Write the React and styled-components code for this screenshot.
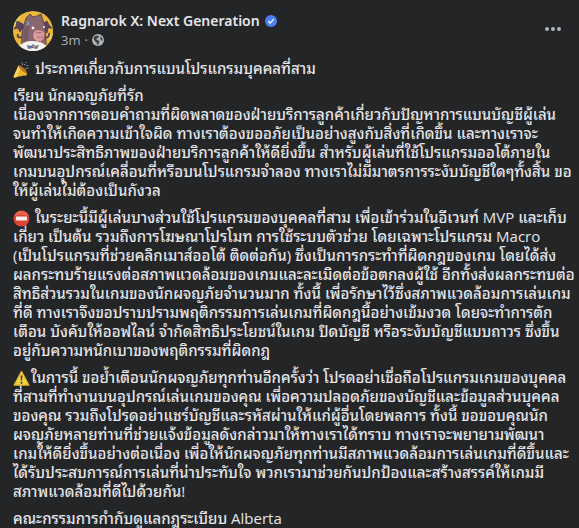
import React from 'react'
import styled, { createGlobalStyle } from 'styled-components'

const GlobalStyle = createGlobalStyle`
  body {
    margin: 0;
    background-color: #242526;
    color: #e4e6eb;
    font-family: 'Open Sans', 'Noto Sans Thai Looped', Loma, sans-serif;
  }
`

const Post = styled.article`
  padding: 11px 13px 0;
`

const Header = styled.header`
  display: flex;
  align-items: center;
  gap: 8px;
  height: 40px;
`

const Avatar = styled.a`
  display: block;
  width: 40px;
  height: 40px;

  svg {
    display: block;
  }
`

const Info = styled.div`
  flex: 1;
  min-width: 0;
`

const NameRow = styled.h2`
  display: flex;
  align-items: center;
  gap: 5px;
  margin: 0;
  font-family: 'Noto Sans', sans-serif;
  font-size: 14px;
  font-weight: 600;
  line-height: 18px;
`

const PageLink = styled.a`
  color: #e4e6eb;
  text-decoration: none;
  white-space: nowrap;
`

const Meta = styled.div`
  display: flex;
  align-items: center;
  gap: 4px;
  color: #b0b3b8;
  font-size: 13px;
  line-height: 20px;

  a {
    color: inherit;
    text-decoration: none;
  }
`

const MenuButton = styled.button`
  display: flex;
  align-items: center;
  align-self: flex-start;
  justify-content: center;
  width: 26px;
  height: 36px;
  padding: 0;
  border: 0;
  border-radius: 50%;
  background: none;
  color: #b0b3b8;
`

const Body = styled.div`
  display: flex;
  flex-direction: column;
  gap: 8px;
  padding-top: 8px;
`

const Paragraph = styled.p`
  margin: 0;
  font-size: 15px;
  font-weight: 500;
  line-height: 19px;
  white-space: pre;
`

const Emoji = styled.svg`
  width: 17px;
  height: 17px;
  margin-right: 1px;
  vertical-align: -4px;
`

const AvatarArt = () => (
  <svg width="40" height="40" viewBox="0 0 40 40" aria-hidden="true">
    <defs>
      <clipPath id="avatar">
        <circle cx="20" cy="20" r="20" />
      </clipPath>
    </defs>
    <g clipPath="url(#avatar)">
      <rect width="40" height="40" fill="#e9b63a" />
      <path d="M0 0h9L4 16H0zM30 0h10v11zM33 24l7-2v12z" fill="#f2cc63" />
      <path d="M10 13 4 10 3 15l-2 3 4-1 2 4 2-3 4 1zM29 13l5-3 2 4 3 3-4 0-1 5-3-4-3 0z" fill="#5d4558" stroke="#473244" strokeWidth=".7" />
      <path d="M10 25c-4 3-6 1-5-2M31 27c4 0 6-2 5-5" fill="none" stroke="#5d4558" strokeWidth="2" />
      <path d="M9 35C8 27 9 20 11 14l2-7 4-4 3 3 4-1 4-2 2 6c2 6 3 12 3 26z" fill="#88676f" stroke="#5b434f" strokeWidth=".9" />
      <path d="M12 15c-2 6-2 12-1 16l5-2c-1-5-1-9 1-13z" fill="#765966" />
      <path d="M20 23c0-4 4-5 7-4 4 0 6 4 4 8-2 5-8 5-10 1-1-1-2-3-1-5z" fill="#dc9b9c" stroke="#8d5d68" strokeWidth=".8" />
      <path d="M23 21c2 1 4 1 6 0M24 25c2 2 4 2 6 0" fill="none" stroke="#9c6670" />
      <circle cx="20" cy="17" r="1.4" fill="#f5eff0" />
      <circle cx="31" cy="16" r="1" fill="#f5eff0" />
      <path d="M15 10c-2 3-1 4 0 4s2-1 0-4" fill="#67acd9" />
      <path d="M5 36c5-5 9-6 15-6s11 2 15 6l-3 5H8z" fill="#f4f3ee" />
      <path d="M14 34l4 1 2-2 2 2 4-1-2 4-4-1-5 1z" fill="#536eaa" />
      <path d="M19 35l3-1 2 1-3 2z" fill="#d49b5d" />
    </g>
  </svg>
)

const Verified = () => (
  <svg width="12" height="12" viewBox="0 0 12 12" role="img" aria-label="Verified">
    <circle cx="6" cy="6" r="6" fill="#4f7df3" />
    <path d="m3.3 6.2 1.9 1.9 3.6-4" fill="none" stroke="#fff" strokeWidth="1.4" />
  </svg>
)

const Globe = () => (
  <svg width="12" height="12" viewBox="0 0 12 12" role="img" aria-label="Public">
    <circle cx="6" cy="6" r="6" fill="#b0b3b8" />
    <path d="M2.2 2.4 5.5 1.5 7 2.6 5.7 4.2 4.2 4.6 4.8 6 6.8 6.5 7.5 8 6 10.8 5 10.8 4.7 8.5 3 7.2 1.4 4.4zM8.5 2.5l1.8 1.8.5 2.5L9.4 6.5 8.3 4.8z" fill="#3a3b3c" />
  </svg>
)

const Popper = () => (
  <Emoji viewBox="0 0 17 17" role="img" aria-label="Party popper">
    <path d="m5.5 4.5 8.5 8c0 2-1 2.5-3 2L2 16.5c-1.2.1-1.5-.6-1.2-1.6z" fill="#efb52f" />
    <path d="m5.5 4.5 2.3 2.2L3.3 16.2l-1.5.3c-1 0-1.2-.6-1-1.6z" fill="#f8d564" />
    <path d="M5.5 4.5c2-1 9 5 8.6 8-.7 1.5-9.2-5.2-8.6-8z" fill="#ba7824" />
    <path d="M9 4.5c.8-1 .5-2.3-.2-3M12 8c1-1 2.3-1 3.3-.4" fill="none" stroke="#8c9da2" />
    <path d="M11 3h1.3v1.3H11zM14 4h1.3v1.3H14zM12.4.9h1.2v1.2h-1.2z" fill="#8d8995" />
  </Emoji>
)

const NoEntry = () => (
  <Emoji viewBox="0 0 17 17" role="img" aria-label="No entry">
    <circle cx="8.5" cy="8.5" r="8" fill="#dc4632" />
    <path d="M1.5 6a7.4 7.4 0 0 1 14 0C11 4 6 4 1.5 6z" fill="#e7664d" />
    <rect x="3" y="6.5" width="11" height="4" rx=".7" fill="#f7eeee" />
  </Emoji>
)

const Warning = () => (
  <Emoji viewBox="0 0 17 17" role="img" aria-label="Warning">
    <path d="M8.5 1.7 15.7 15H1.3z" fill="#f5d442" stroke="#e9b92f" strokeWidth="1.5" strokeLinejoin="round" />
    <path d="M7.5 5.5h2l-.4 5.2H7.9z" fill="#45423c" />
    <circle cx="8.5" cy="12.8" r="1.1" fill="#45423c" />
  </Emoji>
)

const greeting = `เรียน นักผจญภัยที่รัก
เนื่องจากการตอบคำถามที่ผิดพลาดของฝ่ายบริการลูกค้าเกี่ยวกับปัญหาการแบนบัญชีผู้เล่น
จนทำให้เกิดความเข้าใจผิด ทางเราต้องขออภัยเป็นอย่างสูงกับสิ่งที่เกิดขึ้น และทางเราจะ
พัฒนาประสิทธิภาพของฝ่ายบริการลูกค้าให้ดียิ่งขึ้น สำหรับผู้เล่นที่ใช้โปรแกรมออโต้ภายใน
เกมบนอุปกรณ์เคลื่อนที่หรือบนโปรแกรมจำลอง ทางเราไม่มีมาตรการระงับบัญชีใดๆทั้งสิ้น ขอ
ให้ผู้เล่นไม่ต้องเป็นกังวล`

const violations = `ในระยะนี้มีผู้เล่นบางส่วนใช้โปรแกรมของบุคคลที่สาม เพื่อเข้าร่วมในอีเวนท์ MVP และเก็บ
เกี่ยว เป็นต้น รวมถึงการโฆษณาโปรโมท การใช้ระบบตัวช่วย โดยเฉพาะโปรแกรม Macro
(เป็นโปรแกรมที่ช่วยคลิกเมาส์ออโต้ ติดต่อกัน) ซึ่งเป็นการกระทำที่ผิดกฎของเกม โดยได้ส่ง
ผลกระทบร้ายแรงต่อสภาพแวดล้อมของเกมและละเมิดต่อข้อตกลงผู้ใช้ อีกทั้งส่งผลกระทบต่อ
สิทธิส่วนรวมในเกมของนักผจญภัยจำนวนมาก ทั้งนี้ เพื่อรักษาไว้ซึ่งสภาพแวดล้อมการเล่นเกม
ที่ดี ทางเราจึงขอปราบปรามพฤติกรรมการเล่นเกมที่ผิดกฎนี้อย่างเข้มงวด โดยจะทำการตัก
เตือน บังคับให้ออฟไลน์ จำกัดสิทธิประโยชน์ในเกม ปิดบัญชี หรือระงับบัญชีแบบถาวร ซึ่งขึ้น
อยู่กับความหนักเบาของพฤติกรรมที่ผิดกฎ`

const reminder = `ในการนี้ ขอย้ำเตือนนักผจญภัยทุกท่านอีกครั้งว่า โปรดอย่าเชื่อถือโปรแกรมเกมของบุคคล
ที่สามที่ทำงานบนอุปกรณ์เล่นเกมของคุณ เพื่อความปลอดภัยของบัญชีและข้อมูลส่วนบุคคล
ของคุณ รวมถึงโปรดอย่าแชร์บัญชีและรหัสผ่านให้แก่ผู้อื่นโดยพลการ ทั้งนี้ ขอขอบคุณนัก
ผจญภัยหลายท่านที่ช่วยแจ้งข้อมูลดังกล่าวมาให้ทางเราได้ทราบ ทางเราจะพยายามพัฒนา
เกมให้ดียิ่งขึ้นอย่างต่อเนื่อง เพื่อให้นักผจญภัยทุกท่านมีสภาพแวดล้อมการเล่นเกมที่ดีขึ้นและ
ได้รับประสบการณ์การเล่นที่น่าประทับใจ พวกเรามาช่วยกันปกป้องและสร้างสรรค์ให้เกมมี
สภาพแวดล้อมที่ดีไปด้วยกัน!`

export default function App() {
  return (
    <>
      <GlobalStyle />
      <Post>
        <Header>
          <Avatar href="#page" aria-label="Ragnarok X: Next Generation">
            <AvatarArt />
          </Avatar>
          <Info>
            <NameRow>
              <PageLink href="#page">Ragnarok X: Next Generation</PageLink>
              <Verified />
            </NameRow>
            <Meta>
              <a href="#post">3m</a>
              <span>·</span>
              <Globe />
            </Meta>
          </Info>
          <MenuButton type="button" aria-label="Post actions">
            <svg width="16" height="4" viewBox="0 0 16 4" fill="currentColor">
              <circle cx="2" cy="2" r="2" />
              <circle cx="8" cy="2" r="2" />
              <circle cx="14" cy="2" r="2" />
            </svg>
          </MenuButton>
        </Header>
        <Body>
          <Paragraph>
            <Popper /> ประกาศเกี่ยวกับการแบนโปรแกรมบุคคลที่สาม
          </Paragraph>
          <Paragraph>{greeting}</Paragraph>
          <Paragraph>
            <NoEntry /> {violations}
          </Paragraph>
          <Paragraph>
            <Warning />
            {reminder}
          </Paragraph>
          <Paragraph>คณะกรรมการกำกับดูแลกฎระเบียบ Alberta</Paragraph>
        </Body>
      </Post>
    </>
  )
}
